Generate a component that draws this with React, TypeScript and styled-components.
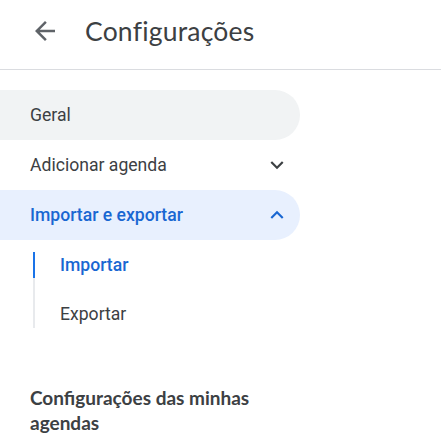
import React from "react";
import styled, { createGlobalStyle } from "styled-components";

const Global = createGlobalStyle`
  html, body { margin: 0; padding: 0; background: #fff; }
  body { font-family: Roboto, "Noto Sans", Arial, sans-serif; color: #3c4043; }
`;

const Page = styled.div`
  width: 441px;
  height: 436px;
  overflow: hidden;
  background: #fff;
`;

const Header = styled.header`
  height: 70px;
  box-sizing: border-box;
  border-bottom: 1px solid #dadce0;
  display: flex;
  align-items: center;
  padding: 0 0 8px 21px;
  gap: 16px;
`;

const BackButton = styled.button`
  width: 48px;
  height: 48px;
  border: 0;
  padding: 0;
  background: transparent;
  display: flex;
  align-items: center;
  justify-content: center;
  color: #5f6368;
`;

const Title = styled.h1`
  margin: 0;
  font-family: Lato, "Open Sans", sans-serif;
  font-weight: 400;
  font-size: 26.5px;
  color: #3c4043;
  letter-spacing: 0.2px;
`;

const Nav = styled.nav`
  width: 300px;
  padding-top: 20px;
  display: flex;
  flex-direction: column;
`;

const NavItem = styled.div<{ $active?: boolean; $hover?: boolean }>`
  height: 50px;
  display: flex;
  align-items: center;
  justify-content: space-between;
  padding: 0 10px 0 30px;
  border-radius: 0 25px 25px 0;
  font-size: 17.6px;
  font-weight: ${(p) => (p.$active ? 500 : 400)};
  color: ${(p) => (p.$active ? "#1967d2" : "#3c4043")};
  background: ${(p) => (p.$active ? "#e8f0fe" : p.$hover ? "#f1f3f4" : "transparent")};
`;

const Chevron = styled.span<{ $active?: boolean }>`
  width: 26px;
  height: 26px;
  display: flex;
  color: ${(p) => (p.$active ? "#1967d2" : "#3c4043")};
`;

const SubList = styled.div`
  margin: 12px 0 0 33px;
  border-left: 2px solid #e8eaed;
  display: flex;
  flex-direction: column;
  gap: 23px;
  padding-bottom: 1px;
`;

const SubItem = styled.div<{ $active?: boolean }>`
  height: 26px;
  line-height: 26px;
  margin-left: -2px;
  border-left: 2px solid ${(p) => (p.$active ? "#1a73e8" : "transparent")};
  padding-left: 25px;
  font-size: 17.6px;
  font-weight: ${(p) => (p.$active ? 500 : 400)};
  color: ${(p) => (p.$active ? "#1967d2" : "#3c4043")};
`;

const SectionHeading = styled.h2`
  margin: 57px 0 0;
  padding: 0 30px;
  font-family: Lato, "Open Sans", sans-serif;
  font-size: 19px;
  font-weight: 700;
  line-height: 25px;
  color: #3c4043;
`;

const ArrowBack = () => (
  <svg width="30" height="30" viewBox="0 0 24 24" fill="currentColor">
    <path d="M20 11H7.83l5.59-5.59L12 4l-8 8 8 8 1.41-1.41L7.83 13H20v-2z" />
  </svg>
);

const ExpandMore = () => (
  <svg width="26" height="26" viewBox="0 0 24 24" fill="currentColor">
    <path d="M16.59 8.59L12 13.17 7.41 8.59 6 10l6 6 6-6z" />
  </svg>
);

const ExpandLess = () => (
  <svg width="26" height="26" viewBox="0 0 24 24" fill="currentColor">
    <path d="M12 8l-6 6 1.41 1.41L12 10.83l4.59 4.58L18 14z" />
  </svg>
);

export default function App() {
  return (
    <Page>
      <Global />
      <Header>
        <BackButton aria-label="Voltar">
          <ArrowBack />
        </BackButton>
        <Title>Configurações</Title>
      </Header>
      <Nav>
        <NavItem $hover>Geral</NavItem>
        <NavItem>
          Adicionar agenda
          <Chevron>
            <ExpandMore />
          </Chevron>
        </NavItem>
        <NavItem $active>
          Importar e exportar
          <Chevron $active>
            <ExpandLess />
          </Chevron>
        </NavItem>
        <SubList>
          <SubItem $active>Importar</SubItem>
          <SubItem>Exportar</SubItem>
        </SubList>
        <SectionHeading>Configurações das minhas agendas</SectionHeading>
      </Nav>
    </Page>
  );
}
